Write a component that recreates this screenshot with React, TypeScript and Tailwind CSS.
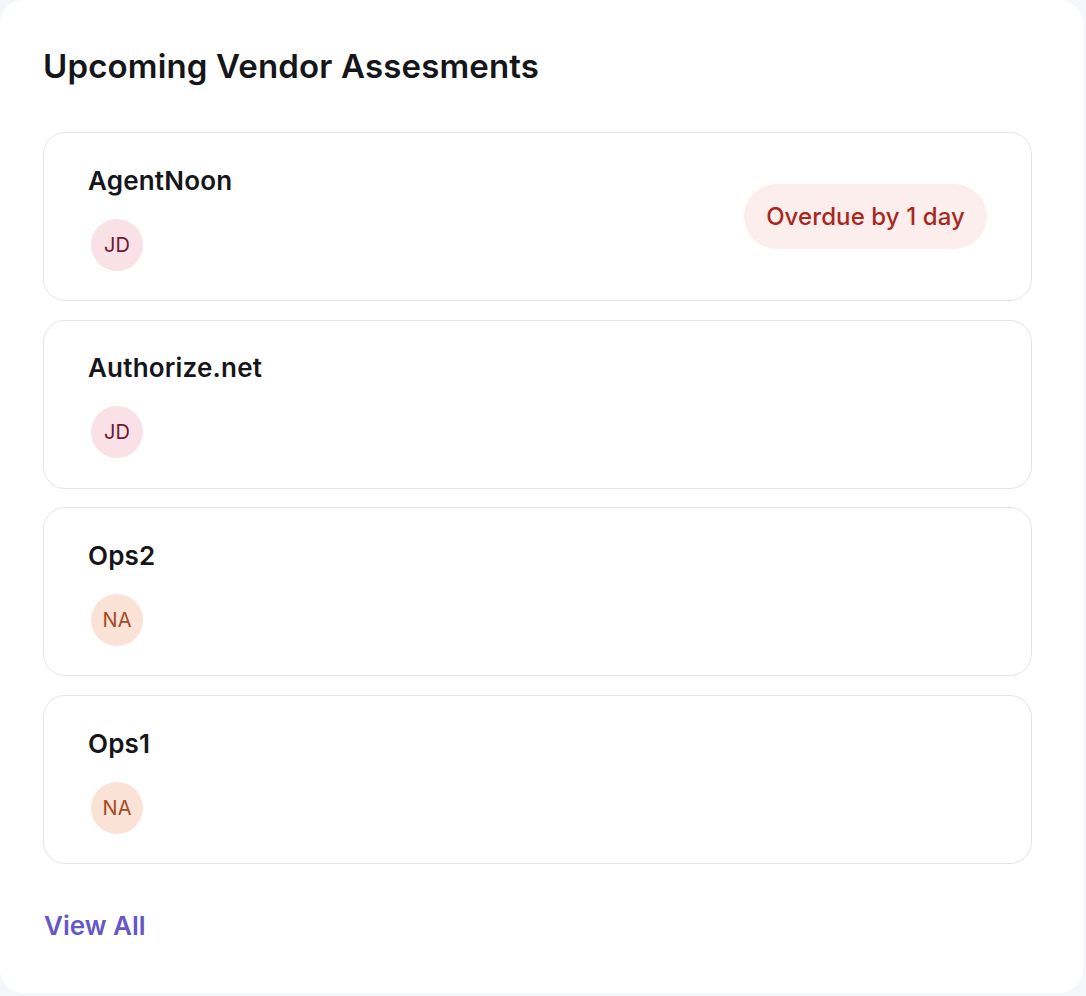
import React from "react";

type Item = { name: string; initials: string; tone: "pink" | "peach"; badge?: string };

const items: Item[] = [
  { name: "AgentNoon", initials: "JD", tone: "pink", badge: "Overdue by 1 day" },
  { name: "Authorize.net", initials: "JD", tone: "pink" },
  { name: "Ops2", initials: "NA", tone: "peach" },
  { name: "Ops1", initials: "NA", tone: "peach" },
];

export default function App() {
  return (
    <div className="min-h-[996px] w-[1086px] bg-[#f6f7fa]" style={{ fontFamily: "Inter, 'Noto Sans', sans-serif" }}>
      <div className="flex h-[993px] w-[1083px] flex-col rounded-[24px] bg-white pl-[43px] pr-[51px] pt-[46px]">
        <h1 className="text-[33px] font-semibold leading-[40px] tracking-[0.15px] text-[#16161a]">
          Upcoming Vendor Assesments
        </h1>
        <div className="mt-[46px] flex flex-col gap-[18.7px]">
          {items.map((it) => (
            <div
              key={it.name}
              className="flex h-[169px] items-center justify-between rounded-[22px] border border-[#e3e5eb] pl-[44px] pr-[44px]"
            >
              <div className="flex flex-col gap-[20px]">
                <div className="text-[26px] font-semibold leading-[36px] tracking-[0.2px] text-[#16161a]">{it.name}</div>
                <div
                  className={
                    it.tone === "pink"
                      ? "ml-[3px] flex h-[52px] w-[52px] items-center justify-center rounded-full bg-[#f9e1e7] text-[20px] text-[#6d1830]"
                      : "ml-[3px] flex h-[52px] w-[52px] items-center justify-center rounded-full bg-[#fbe2d7] text-[20px] text-[#a34b26]"
                  }
                >
                  {it.initials}
                </div>
              </div>
              {it.badge && (
                <div className="flex h-[65px] items-center rounded-full bg-[#fdeeee] px-[22px] text-[24px] font-medium tracking-[0.1px] text-[#a8281e]">
                  {it.badge}
                </div>
              )}
            </div>
          ))}
        </div>
        <a className="mt-[45px] pl-[1px] text-[26px] font-semibold leading-[34px] text-[#6657c9]">View All</a>
      </div>
    </div>
  );
}
